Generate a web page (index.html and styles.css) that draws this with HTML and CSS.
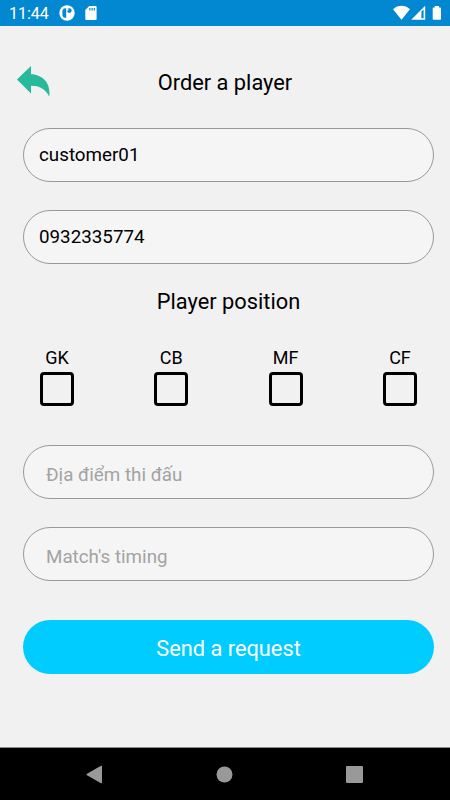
FILE: index.html
```html
<!doctype html>
<html lang="en">
	<head>
		<meta charset="UTF-8" />
		<meta name="viewport" content="width=device-width, initial-scale=1.0" />
		<title>Order a player</title>
		<link rel="stylesheet" href="styles.css">
	</head>

	<body>
		<div class="status-bar">
			<span class="clock">11:44</span>
			<svg class="app-icon" width="16" height="16" viewBox="0 0 16 16">
				<circle cx="8" cy="8" r="7.7" fill="#fff" />
				<path d="M7.200 3.200H6.400C4.300 3.200 3.400 4.500 3.400 6.400v3.200c0 2 .9 3.100 2.600 3.100h1.200z" fill="#0288d1" />
				<circle cx="10.300" cy="5.600" r="2.400" fill="#0288d1" />
				<circle cx="8.700" cy="4.900" r="0.800" fill="#fff" />
			</svg>
			<svg class="sd-icon" width="12" height="14" viewBox="0 0 12 14">
				<path d="M4.200 0H10.600a1 1 0 0 1 1 1v12a1 1 0 0 1-1 1H1.300a1 1 0 0 1-1-1V4z" fill="#fff" />
				<path d="M4.300 2h1.200v2.500H4.300zM6.500 2h1.200v2.500H6.500zM8.700 2h1.200v2.500H8.700z" fill="#0288d1" />
			</svg>
			<svg class="system-icons" width="50" height="16" viewBox="0 0 50 16">
				<path d="M1 4.200C6-.3 13 -.3 18 4.200L9.500 14.800z" fill="#fff" />
				<path d="M33.200 0.800V14.800H19.200z" fill="#fff" />
				<path d="M29.400 6.300V13.300h2.200V4.800z" fill="#0288d1" />
				<path d="M42.800 1H47v1.500h1.200a.8.800 0 0 1 .8.800V14a.8.800 0 0 1-.8.800h-6.700a.8.800 0 0 1-.8-.8V3.300a.8.800 0 0 1 .8-.8h1.300z" fill="#fff" />
			</svg>
		</div>

		<main>
			<header>
				<a href="#" class="back" aria-label="Back">
					<svg width="33" height="31" viewBox="0 0 33 31">
						<path d="M0 13.500L14 0V8.200C24 8.500 34 15 32.300 30.500C28 22.500 22 19.500 14 19.700V27.500z" fill="#26b99a" />
					</svg>
				</a>
				<h1>Order a player</h1>
			</header>

			<form>
				<input type="text" class="field" value="customer01" />
				<input type="text" class="field" value="0932335774" />

				<h2>Player position</h2>
				<div class="positions">
					<label>GK<input type="checkbox" /></label>
					<label>CB<input type="checkbox" /></label>
					<label>MF<input type="checkbox" /></label>
					<label>CF<input type="checkbox" /></label>
				</div>

				<input type="text" class="field hint" placeholder="Địa điểm thi đấu" />
				<input type="text" class="field hint" placeholder="Match's timing" />
				<button type="button">Send a request</button>
			</form>
		</main>

		<nav>
			<svg width="17" height="19" viewBox="0 0 17 19"><path d="M15 .8 1 8.700a.9.900 0 0 0 0 1.500L15 18.200q1 .3 1-.7V1.500q0-1-1-.7z" /></svg>
			<svg width="17" height="17" viewBox="0 0 17 17"><circle cx="8.500" cy="8.500" r="8" /></svg>
			<svg width="17" height="17" viewBox="0 0 17 17"><rect width="17" height="17" rx="1" /></svg>
		</nav>
	</body>
</html>
```

FILE: styles.css
```css
* {
	box-sizing: border-box;
}

body {
	margin: 0;
	height: 800px;
	display: flex;
	flex-direction: column;
	overflow: hidden;
	font-family: Roboto, sans-serif;
	color: #000;
	background-color: #f1f1f1;
}

.status-bar {
	display: flex;
	align-items: center;
	height: 26px;
	padding: 0 8px 0 9px;
	color: #fff;
	background-color: #0288d1;
}

.clock {
	width: 50px;
	font-size: 16px;
	line-height: 26px;
	padding-top: 1px;
}

.sd-icon {
	margin-left: 10px;
}

.system-icons {
	margin-left: auto;
}

main {
	flex: 1;
}

header {
	display: flex;
	align-items: center;
	height: 102px;
	padding: 10px 17px 0;
}

.back {
	height: 31px;
	margin-bottom: 2px;
}

h1,
h2 {
	margin: 0;
	font-size: 21.8px;
	font-weight: 400;
	text-align: center;
}

h1 {
	flex: 1;
	padding: 1px 33px 0 0;
}

h2 {
	height: 82px;
	padding-top: 25px;
	line-height: 26px;
}

form {
	padding: 0 16px 0 23px;
}

.field {
	display: block;
	width: 100%;
	height: 54px;
	margin: 0 0 28px;
	padding: 0 15px;
	font-family: inherit;
	font-size: 18.8px;
	color: #000;
	background-color: #f5f5f5;
	border: 1px solid #999;
	border-radius: 27px;
}

.field + h2 {
	margin-top: -28px;
}

.hint {
	padding: 5px 22px 0;
}

.field::placeholder {
	color: #a3a3a3;
}

.positions {
	display: flex;
	justify-content: space-between;
	height: 99px;
	padding: 0 17px;
}

.positions label {
	display: flex;
	flex-direction: column;
	align-items: center;
	width: 34px;
	font-size: 18px;
	line-height: 24px;
}

.positions input {
	appearance: none;
	width: 34px;
	height: 34px;
	margin: 2px 0 0;
	border: 3px solid #000;
	border-radius: 4px;
}

button {
	display: block;
	width: 100%;
	height: 54px;
	margin-top: 39px;
	padding: 3px 0 0;
	font-family: inherit;
	font-size: 21.8px;
	color: #fff;
	background-color: #0cf;
	border: none;
	border-radius: 27px;
}

nav {
	display: flex;
	justify-content: space-between;
	align-items: center;
	height: 53px;
	padding: 0 87px 0 86px;
	background-color: #000;
	border-top: 1px solid #8a8a8a;
}

nav svg {
	fill: #999;
}
```
